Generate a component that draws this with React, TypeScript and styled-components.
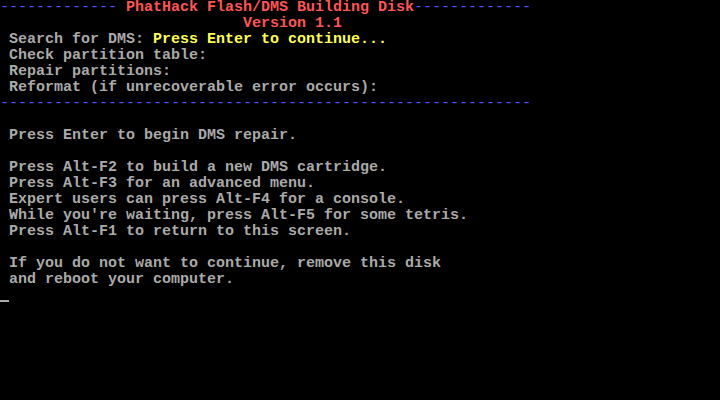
import React from 'react'
import styled, { createGlobalStyle } from 'styled-components'

const GlobalStyle = createGlobalStyle`
    html, body {
        margin: 0;
        padding: 0;
        background: #000;
    }
`

const Screen = styled.div`
    width: 720px;
    height: 400px;
    overflow: hidden;
    background: #000;
    display: flex;
    flex-direction: column;
    font-family: "Liberation Mono", "DejaVu Sans Mono", monospace;
    font-size: 15px;
    font-weight: bold;
    color: #aaaaaa;
`

const Line = styled.div`
    height: 16px;
    line-height: 16px;
    white-space: pre;
`

const Text = styled.span<{ $color?: string }>`
    color: ${props => props.$color || '#aaaaaa'};
`

const Rule = styled.span`
    color: #5555ff;
    font-weight: normal;
`

const Cursor = styled.div`
    width: 9px;
    height: 2px;
    margin-top: 12px;
    background: #aaaaaa;
`

const dashes = '-'.repeat(13)

const menu = [
    'Press Alt-F2 to build a new DMS cartridge.',
    'Press Alt-F3 for an advanced menu.',
    'Expert users can press Alt-F4 for a console.',
    "While you're waiting, press Alt-F5 for some tetris.",
    'Press Alt-F1 to return to this screen.',
]

const App = () => {
    return (
        <>
            <GlobalStyle />
            <Screen>
                <Line>
                    <Rule>{dashes}</Rule>
                    <Text $color="#ff5555"> PhatHack Flash/DMS Building Disk</Text>
                    <Rule>{dashes}</Rule>
                </Line>
                <Line>
                    <Text $color="#ff5555">{' '.repeat(27)}Version 1.1</Text>
                </Line>
                <Line>
                    <Text> Search for DMS: </Text>
                    <Text $color="#ffff55">Press Enter to continue...</Text>
                </Line>
                <Line> Check partition table:</Line>
                <Line> Repair partitions:</Line>
                <Line> Reformat (if unrecoverable error occurs):</Line>
                <Line>
                    <Rule>{'-'.repeat(59)}</Rule>
                </Line>
                <Line />
                <Line> Press Enter to begin DMS repair.</Line>
                <Line />
                {menu.map(item => (
                    <Line key={item}> {item}</Line>
                ))}
                <Line />
                <Line> If you do not want to continue, remove this disk</Line>
                <Line> and reboot your computer.</Line>
                <Line>
                    <Cursor />
                </Line>
            </Screen>
        </>
    )
}

export default App
